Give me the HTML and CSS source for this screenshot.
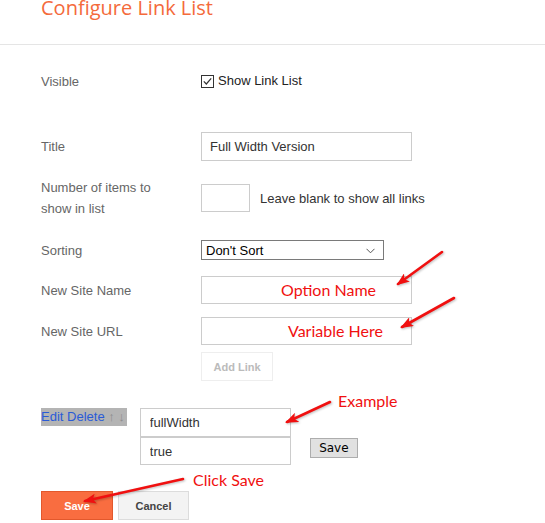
FILE: index.html
```html
<!DOCTYPE html>
<html lang="en">
<head>
    <meta charset="UTF-8">
    <meta name="viewport" content="width=device-width, initial-scale=1.0">
    <title>Configure Link List</title>
    <link rel="stylesheet" href="styles.css">
</head>
<body>

<div class="page">
    <div class="header">
        <h2 class="title">Configure Link List</h2>
    </div>

    <div class="form">
        <div class="row row-visible">
            <div class="label">Visible</div>
            <label class="check">
                <svg class="box" width="13" height="13" viewBox="0 0 13 13">
                    <rect x="0.5" y="0.5" width="12" height="12" fill="#fff" stroke="#333"/>
                    <path d="M2.8 6.4 L5.3 9 L10.2 3.4" fill="none" stroke="#333" stroke-width="1.2"/>
                </svg>
                Show Link List
            </label>
        </div>

        <div class="row row-title">
            <div class="label">Title</div>
            <input class="text wide" type="text" value="Full Width Version">
        </div>

        <div class="row row-number">
            <div class="label">Number of items to show in list</div>
            <input class="text short" type="text" value="">
            <span class="hint">Leave blank to show all links</span>
        </div>

        <div class="row row-sort">
            <div class="label">Sorting</div>
            <div class="select-wrap">
                <select class="select">
                    <option>Don't Sort</option>
                </select>
                <svg class="chevron" width="9" height="6" viewBox="0 0 9 6">
                    <path d="M0.5 0.8 L4.5 4.8 L8.5 0.8" fill="none" stroke="#555" stroke-width="1"/>
                </svg>
            </div>
        </div>

        <div class="row row-name">
            <div class="label">New Site Name</div>
            <input class="text wide" type="text" value="">
        </div>

        <div class="row row-url">
            <div class="label">New Site URL</div>
            <input class="text wide" type="text" value="">
        </div>

        <div class="row row-add">
            <button class="add-link">Add Link</button>
        </div>

        <div class="row row-edit">
            <span class="edit-links"><a href="#">Edit</a> <a href="#">Delete</a> <span class="move">&#8593; &#8595;</span></span>
            <div class="pair">
                <input class="text pair-input" type="text" value="fullWidth">
                <input class="text pair-input" type="text" value="true">
            </div>
            <button class="small-save">Save</button>
        </div>

        <div class="row row-buttons">
            <button class="btn btn-save">Save</button>
            <button class="btn btn-cancel">Cancel</button>
        </div>
    </div>

    <!-- red notes drawn over the form -->
    <div class="notes">
        <span class="note note-name">Option Name</span>
        <span class="note note-url">Variable Here</span>
        <span class="note note-example">Example</span>
        <span class="note note-save">Click Save</span>
        <svg class="arrows" width="545" height="523" viewBox="0 0 545 523">
            <defs>
                <marker id="head" markerUnits="userSpaceOnUse" markerWidth="13" markerHeight="10" refX="11" refY="5" orient="auto">
                    <path d="M0 0 L13 5 L0 10 L3 5 z" fill="#f01010"/>
                </marker>
            </defs>
            <g stroke="#f01010" stroke-width="2.6" stroke-linecap="round" marker-end="url(#head)">
                <line x1="442" y1="252" x2="398" y2="284"/>
                <line x1="454" y1="298" x2="402" y2="327"/>
                <line x1="330" y1="402" x2="287" y2="422"/>
                <line x1="183" y1="479" x2="85" y2="501"/>
            </g>
        </svg>
    </div>
</div>

</body>
</html>
```

FILE: styles.css
```css
body {
    margin: 0;
    padding: 0;
    background-color: #fff;
    font-family: Arial, "Liberation Sans", sans-serif;
    font-size: 13px;
}
.page {
    position: relative;
    width: 545px;
    height: 523px;
    overflow: hidden;
}
.header {
    height: 44px;
    border-bottom: 1px solid #e5e5e5;
    padding-left: 41px;
}
.title {
    margin: 0;
    font-family: "Open Sans", sans-serif;
    font-weight: normal;
    font-size: 20px;
    line-height: 16px;
    color: #f46a3b;
}
.form {
    padding: 26px 0 0 41px;
}
.row {
    display: flex;
    align-items: center;
}
.label {
    width: 160px;
    padding-right: 30px;
    box-sizing: border-box;
    color: #666;
    line-height: 21px;
}
.check {
    display: flex;
    align-items: center;
    color: #222;
    line-height: 20px;
}
.box {
    margin-right: 4px;
}
.text {
    height: 29px;
    margin: 0;
    padding: 0 0 0 8px;
    box-sizing: border-box;
    border: 1px solid #ccc;
    font-family: Arial, "Liberation Sans", sans-serif;
    font-size: 13px;
    color: #333;
    outline: none;
}
.wide {
    width: 211px;
}
.short {
    width: 49px;
    height: 28px;
}
.hint {
    margin-left: 10px;
    color: #333;
}
.row-visible {
    height: 20px;
}
.row-title {
    margin-top: 41px;
}
.row-number {
    margin-top: 16px;
}
.row-sort {
    margin-top: 21px;
    height: 20px;
}
.select-wrap {
    position: relative;
}
.select {
    width: 183px;
    height: 20px;
    margin: 0;
    padding: 0 0 0 4px;
    border: 1px solid #7a7a7a;
    border-radius: 0;
    background-color: #fff;
    font-family: Arial, "Liberation Sans", sans-serif;
    font-size: 13px;
    color: #000;
    -webkit-appearance: none;
    appearance: none;
}
.chevron {
    position: absolute;
    right: 9px;
    top: 8px;
    pointer-events: none;
}
.row-name {
    margin-top: 16px;
}
.row-name .text, .row-url .text {
    height: 28px;
}
.row-url {
    margin-top: 13px;
}
.row-add {
    margin-top: 7px;
    padding-left: 160px;
}
.add-link {
    width: 72px;
    height: 29px;
    background-color: #fff;
    border: 1px solid #eee;
    color: #bbb;
    font-family: Arial, "Liberation Sans", sans-serif;
    font-size: 11px;
    font-weight: bold;
}
.row-edit {
    margin-top: 27px;
    align-items: flex-start;
}
.edit-links {
    background-color: #b4b4b4;
    line-height: 18px;
    padding-right: 2px;
}
.edit-links a {
    color: #2a5bd7;
    text-decoration: none;
}
.move {
    color: #8c8c8c;
}
.pair {
    display: flex;
    flex-direction: column;
    margin-left: 13px;
}
.pair-input {
    width: 151px;
    padding-left: 9px;
}
.pair-input + .pair-input {
    height: 28px;
}
.small-save {
    width: 48px;
    height: 20px;
    margin: 30px 0 0 19px;
    padding: 0;
    background-color: #e1e1e1;
    border: 1px solid #adadad;
    color: #000;
    font-family: "DejaVu Sans", Verdana, sans-serif;
    font-size: 12px;
}
.row-buttons {
    margin-top: 26px;
}
.btn {
    height: 29px;
    padding: 0;
    font-family: Arial, "Liberation Sans", sans-serif;
    font-size: 11px;
    font-weight: bold;
}
.btn-save {
    width: 72px;
    background-color: #f96d40;
    border: 1px solid #e2582c;
    color: #fff;
}
.btn-cancel {
    width: 71px;
    margin-left: 5px;
    background-color: #f3f3f3;
    border: 1px solid #dcdcdc;
    color: #444;
}
.notes {
    position: absolute;
    left: 0;
    top: 0;
    width: 545px;
    height: 523px;
    pointer-events: none;
}
.note {
    position: absolute;
    font-family: Lato, sans-serif;
    font-size: 16px;
    line-height: 20px;
    color: #f01010;
}
.note-name {
    left: 281px;
    top: 280px;
}
.note-url {
    left: 288px;
    top: 321px;
}
.note-example {
    left: 338px;
    top: 391px;
}
.note-save {
    left: 193px;
    top: 470px;
}
.arrows {
    position: absolute;
    left: 0;
    top: 0;
    filter: drop-shadow(1px 1px 1px rgba(0, 0, 0, 0.25));
}
```
